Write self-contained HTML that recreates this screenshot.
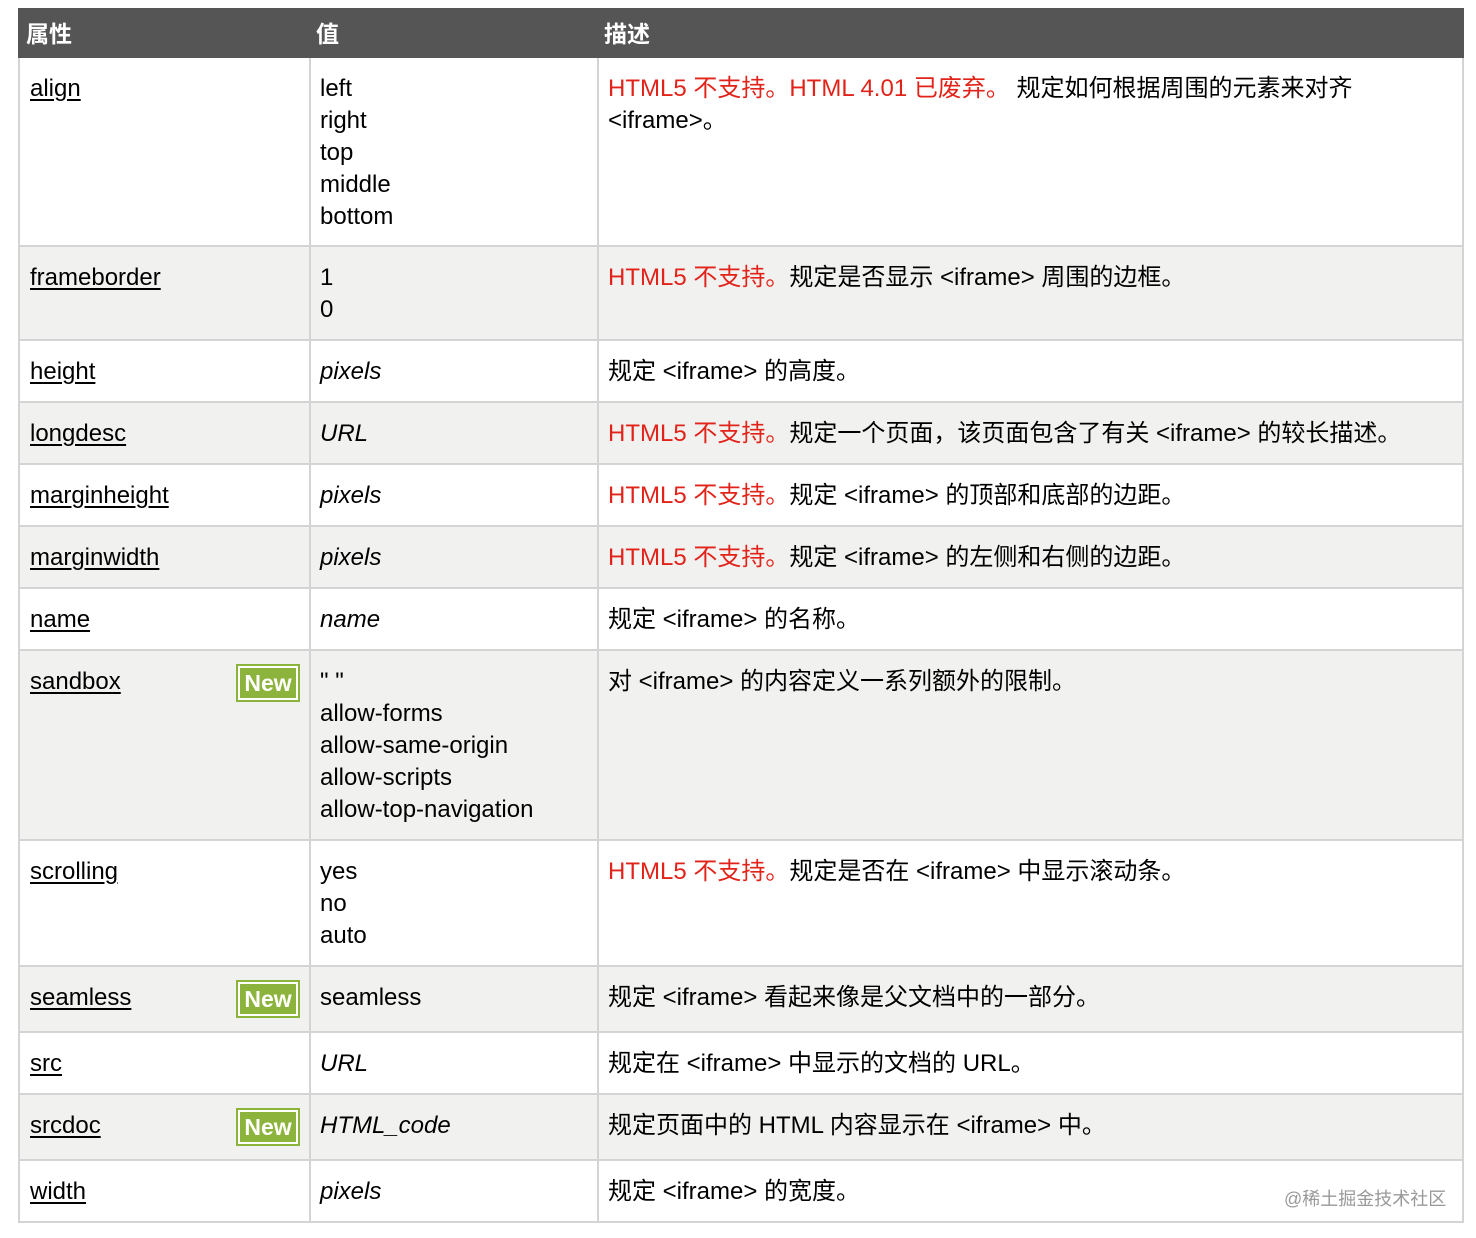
<!DOCTYPE html>
<html><head><meta charset="utf-8"><style>
body{margin:0;background:#fff;width:1476px;height:1238px;position:relative;font-family:"Liberation Sans","Noto Sans CJK SC",sans-serif;font-size:24px;color:#000;}
.hd{position:absolute;left:18px;top:8px;width:1446px;height:50px;background:#555;color:#fff;font-weight:bold;}
.hd span{position:absolute;top:11px;line-height:30px;font-size:23px}
.r{position:absolute;left:18px;width:1442px;border:2px solid #d4d4d4;border-top:none;box-sizing:content-box}
.r.g{background:#f1f1ef}
.c{position:absolute;top:15px;line-height:32px;white-space:nowrap}
.c1{left:10px}.c2{left:300px}.c3{left:588px}
.v1{position:absolute;left:289px;top:0;bottom:0;width:2px;background:#d4d4d4}
.v2{position:absolute;left:577px;top:0;bottom:0;width:2px;background:#d4d4d4}
u{text-decoration:underline;text-underline-offset:3px}
i{font-style:italic}
.red{color:#e2231a}
.new{position:absolute;left:216px;top:13px;width:60px;height:34px;background:#8cb43c;border:2px solid #8cb43c;outline:2px solid #fff;outline-offset:-4px;color:#fff;font-weight:bold;font-size:23px;line-height:34px;text-align:center;}
.wm{position:absolute;left:1284px;top:1185px;font-size:18px;color:#999}
</style></head><body>
<div class="hd"><span style="left:8px">属性</span><span style="left:298px">值</span><span style="left:586px">描述</span></div>

<div class="r" style="top:58px;height:187px"><div class="v1"></div><div class="v2"></div>
<div class="c c1"><u>align</u></div><div class="c c2">left<br>right<br>top<br>middle<br>bottom</div>
<div class="c c3"><span class="red">HTML5 不支持。HTML 4.01 已废弃。</span> 规定如何根据周围的元素来对齐<br>&lt;iframe&gt;。</div></div>

<div class="r g" style="top:247px;height:92px"><div class="v1"></div><div class="v2"></div>
<div class="c c1"><u>frameborder</u></div><div class="c c2">1<br>0</div>
<div class="c c3"><span class="red">HTML5 不支持。</span>规定是否显示 &lt;iframe&gt; 周围的边框。</div></div>

<div class="r" style="top:341px;height:60px"><div class="v1"></div><div class="v2"></div>
<div class="c c1"><u>height</u></div><div class="c c2"><i>pixels</i></div>
<div class="c c3">规定 &lt;iframe&gt; 的高度。</div></div>

<div class="r g" style="top:403px;height:60px"><div class="v1"></div><div class="v2"></div>
<div class="c c1"><u>longdesc</u></div><div class="c c2"><i>URL</i></div>
<div class="c c3"><span class="red">HTML5 不支持。</span>规定一个页面，该页面包含了有关 &lt;iframe&gt; 的较长描述。</div></div>

<div class="r" style="top:465px;height:60px"><div class="v1"></div><div class="v2"></div>
<div class="c c1"><u>marginheight</u></div><div class="c c2"><i>pixels</i></div>
<div class="c c3"><span class="red">HTML5 不支持。</span>规定 &lt;iframe&gt; 的顶部和底部的边距。</div></div>

<div class="r g" style="top:527px;height:60px"><div class="v1"></div><div class="v2"></div>
<div class="c c1"><u>marginwidth</u></div><div class="c c2"><i>pixels</i></div>
<div class="c c3"><span class="red">HTML5 不支持。</span>规定 &lt;iframe&gt; 的左侧和右侧的边距。</div></div>

<div class="r" style="top:589px;height:60px"><div class="v1"></div><div class="v2"></div>
<div class="c c1"><u>name</u></div><div class="c c2"><i>name</i></div>
<div class="c c3">规定 &lt;iframe&gt; 的名称。</div></div>

<div class="r g" style="top:651px;height:188px"><div class="v1"></div><div class="v2"></div>
<div class="c c1"><u>sandbox</u></div><div class="new">New</div><div class="c c2">" "<br>allow-forms<br>allow-same-origin<br>allow-scripts<br>allow-top-navigation</div>
<div class="c c3">对 &lt;iframe&gt; 的内容定义一系列额外的限制。</div></div>

<div class="r" style="top:841px;height:124px"><div class="v1"></div><div class="v2"></div>
<div class="c c1"><u>scrolling</u></div><div class="c c2">yes<br>no<br>auto</div>
<div class="c c3"><span class="red">HTML5 不支持。</span>规定是否在 &lt;iframe&gt; 中显示滚动条。</div></div>

<div class="r g" style="top:967px;height:64px"><div class="v1"></div><div class="v2"></div>
<div class="c c1"><u>seamless</u></div><div class="new">New</div><div class="c c2">seamless</div>
<div class="c c3">规定 &lt;iframe&gt; 看起来像是父文档中的一部分。</div></div>

<div class="r" style="top:1033px;height:60px"><div class="v1"></div><div class="v2"></div>
<div class="c c1"><u>src</u></div><div class="c c2"><i>URL</i></div>
<div class="c c3">规定在 &lt;iframe&gt; 中显示的文档的 URL。</div></div>

<div class="r g" style="top:1095px;height:64px"><div class="v1"></div><div class="v2"></div>
<div class="c c1"><u>srcdoc</u></div><div class="new">New</div><div class="c c2"><i>HTML_code</i></div>
<div class="c c3">规定页面中的 HTML 内容显示在 &lt;iframe&gt; 中。</div></div>

<div class="r" style="top:1161px;height:60px"><div class="v1"></div><div class="v2"></div>
<div class="c c1"><u>width</u></div><div class="c c2"><i>pixels</i></div>
<div class="c c3">规定 &lt;iframe&gt; 的宽度。</div></div>

<div class="wm">@稀土掘金技术社区</div>
</body></html>
